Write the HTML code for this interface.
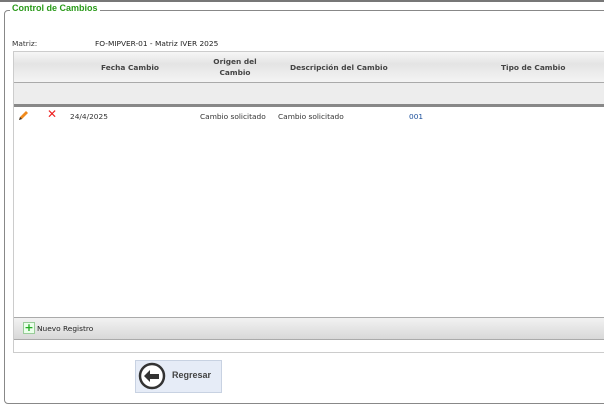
<html><head><style>
body{margin:0;width:604px;height:405px;overflow:hidden;background:#fff;font-family:"DejaVu Sans","Liberation Sans",sans-serif;font-size:7.4px;color:#333;position:relative}
.a{position:absolute}
</style></head><body>
<div class="a" style="left:0;top:0;width:604px;height:2px;background:#777"></div>
<div class="a" style="left:4px;top:10px;width:610px;height:392px;border:1px solid #888;border-radius:4px"></div>
<div class="a" style="left:10px;top:3px;background:#fff;padding:0 2px;color:#2a9a1a;font-size:9px;font-family:'Liberation Sans',sans-serif;font-weight:bold">Control de Cambios</div>
<div class="a" style="left:12px;top:39px">Matriz:</div>
<div class="a" style="left:95px;top:39px;color:#222">FO-MIPVER-01 - Matriz IVER 2025</div>
<div class="a" style="left:13px;top:51px;width:600px;height:300px;border:1px solid #ccc"></div>
<div class="a" style="left:14px;top:52px;width:600px;height:30px;background:linear-gradient(#f6f6f6,#e4e4e4 40%,#f4f4f4);border-bottom:1px solid #aaa"></div>
<div class="a" style="left:101px;top:63px;font-weight:bold;color:#444">Fecha Cambio</div>
<div class="a" style="left:205px;top:56px;width:60px;text-align:center;font-weight:bold;color:#444;line-height:11px">Origen del<br>Cambio</div>
<div class="a" style="left:290px;top:63px;font-weight:bold;color:#444">Descripción del Cambio</div>
<div class="a" style="left:501px;top:63px;font-weight:bold;color:#444">Tipo de Cambio</div>
<div class="a" style="left:14px;top:83px;width:600px;height:21px;background:#ededed"></div>
<div class="a" style="left:14px;top:104px;width:600px;height:3px;background:#888"></div>
<svg class="a" style="left:18px;top:110px" width="11" height="11" viewBox="0 0 11 11"><path d="M1 10 L2 7 L8 1 L10 3 L4 9 Z" fill="#f08a1c"/><path d="M1 10 L2 7 L4 9 Z" fill="#333"/></svg>
<div class="a" style="left:47px;top:107px;color:#e22;font-size:12px;font-weight:bold">✕</div>
<div class="a" style="left:70px;top:112px">24/4/2025</div>
<div class="a" style="left:200px;top:112px">Cambio solicitado</div>
<div class="a" style="left:278px;top:112px">Cambio solicitado</div>
<div class="a" style="left:409px;top:112px;color:#1a4e9a">001</div>
<div class="a" style="left:14px;top:317px;width:600px;height:21px;background:linear-gradient(#f2f2f2,#d8d8d8);border-top:1px solid #aaa;border-bottom:1px solid #aaa"></div>
<div class="a" style="left:23px;top:322px;width:10px;height:10px;border:1px solid #9c9;background:#eaffea;color:#2a2;font-size:11px;line-height:10px;text-align:center;font-weight:bold">+</div>
<div class="a" style="left:37px;top:324px;color:#222">Nuevo Registro</div>
<div class="a" style="left:135px;top:360px;width:85px;height:31px;background:#e6ecf7;border:1px solid #c8d2e2"></div>
<svg class="a" style="left:138px;top:362px" width="28" height="28" viewBox="0 0 28 28"><circle cx="14" cy="14" r="12" fill="#fff" stroke="#333" stroke-width="2.5"/><path d="M6 14 L12 8 L12 12 L21 12 L21 17 L12 17 L12 20 Z" fill="#333"/></svg>
<div class="a" style="left:172px;top:370px;font-size:9px;color:#444;font-family:'Liberation Sans',sans-serif;font-weight:bold">Regresar</div>
</body></html>
